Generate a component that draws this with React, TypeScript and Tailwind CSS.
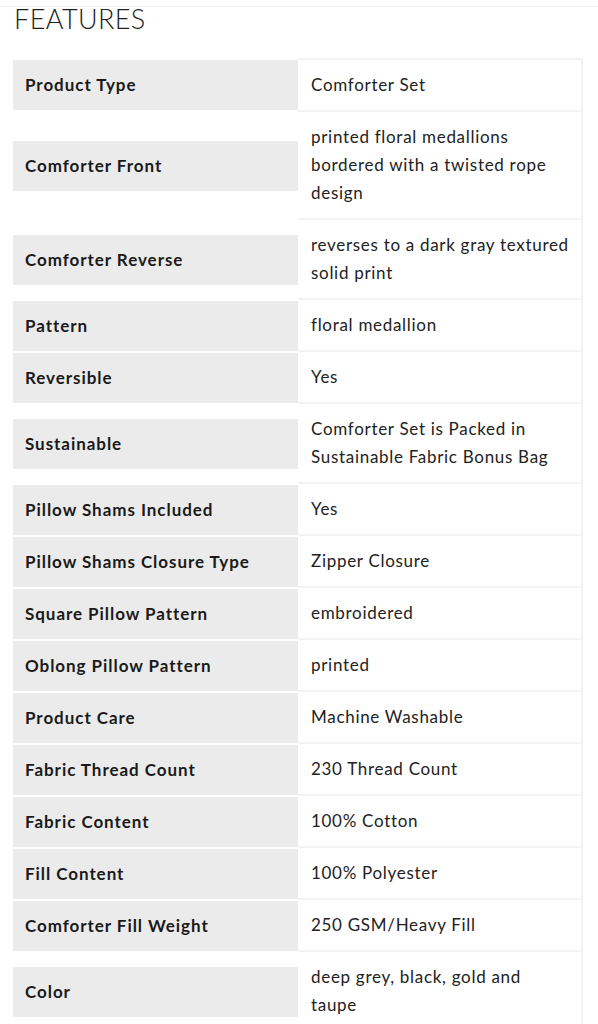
const rows: [string, string[]][] = [
  ["Product Type", ["Comforter Set"]],
  ["Comforter Front", ["printed floral medallions", "bordered with a twisted rope", "design"]],
  ["Comforter Reverse", ["reverses to a dark gray textured", "solid print"]],
  ["Pattern", ["floral medallion"]],
  ["Reversible", ["Yes"]],
  ["Sustainable", ["Comforter Set is Packed in", "Sustainable Fabric Bonus Bag"]],
  ["Pillow Shams Included", ["Yes"]],
  ["Pillow Shams Closure Type", ["Zipper Closure"]],
  ["Square Pillow Pattern", ["embroidered"]],
  ["Oblong Pillow Pattern", ["printed"]],
  ["Product Care", ["Machine Washable"]],
  ["Fabric Thread Count", ["230 Thread Count"]],
  ["Fabric Content", ["100% Cotton"]],
  ["Fill Content", ["100% Polyester"]],
  ["Comforter Fill Weight", ["250 GSM/Heavy Fill"]],
  ["Color", ["deep grey, black, gold and", "taupe"]],
];

export default function App() {
  return (
    <div className="w-[598px] h-[1024px] overflow-hidden bg-white font-['Lato',sans-serif] text-[#1a1a1a]">
      <div className="mt-[6px] border-t border-[#f0f0f0] px-[13px]">
        <h2 className="pl-[1px] text-[27px] leading-[24px] font-light tracking-[0.4px] text-[#222]">FEATURES</h2>
        <div className="mt-[27px] w-[570px] [&>div:first-child>div:last-child]:border-t-2">
          {rows.map(([label, value]) => (
            <div key={label} className="flex items-center">
              <div className="w-[285px] shrink-0 bg-[#ebebeb] border-b border-white px-3 py-[11px] text-[17px] leading-[28px] font-bold tracking-[0.95px]">
                {label}
              </div>
              <div className="flex-1 border-b-2 border-r-2 border-[#f3f3f3] pl-[13px] pr-2 py-[11px] text-[17px] leading-[28px] tracking-[0.7px] text-[#222]">
                {value.map((line) => (
                  <div key={line} className="whitespace-nowrap">{line}</div>
                ))}
              </div>
            </div>
          ))}
        </div>
      </div>
    </div>
  );
}
